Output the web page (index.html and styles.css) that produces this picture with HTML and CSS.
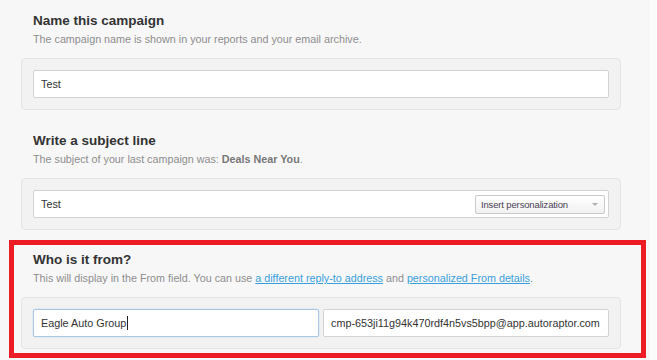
FILE: index.html
```html
<!DOCTYPE html>
<html>
<head>
<meta charset="utf-8">
<link rel="stylesheet" href="styles.css">
</head>
<body>
<div class="page">
  <section class="field">
    <h2 class="title">Name this campaign</h2>
    <p class="hint">The campaign name is shown in your reports and your email archive.</p>
    <div class="well">
      <div class="input">Test</div>
    </div>
  </section>

  <section class="field">
    <h2 class="title">Write a subject line</h2>
    <p class="hint">The subject of your last campaign was: <strong>Deals Near You</strong>.</p>
    <div class="well">
      <div class="input input-split">
        <span>Test</span>
        <div class="select"><span>Insert personalization</span><span class="arrow"></span></div>
      </div>
    </div>
  </section>

  <div class="highlight">
    <section class="field field-inner">
      <h2 class="title">Who is it from?</h2>
      <p class="hint">This will display in the From field. You can use <a href="#">a different reply-to address</a> and <a href="#">personalized From details</a>.</p>
      <div class="well">
        <div class="row">
          <div class="input input-name input-focus">Eagle Auto Group<span class="caret"></span></div>
          <div class="input input-email">cmp-653ji11g94k470rdf4n5vs5bpp@app.autoraptor.com</div>
        </div>
      </div>
    </section>
  </div>
</div>
</body>
</html>
```
FILE: styles.css
```css
html, body {
  margin: 0;
  padding: 0;
}
body {
  background: #fbfbfb;
  font-family: "Liberation Sans", Arial, sans-serif;
  color: #333;
}
.page {
  width: 650px;
  height: 360px;
  box-sizing: border-box;
  padding-top: 12px;
  background: #f7f7f7;
  overflow: hidden;
}
.field {
  margin-left: 21px;
  width: 600px;
}
.field + .field {
  margin-top: 22px;
}
.title {
  margin: 0;
  padding-left: 12px;
  font-size: 13.5px;
  line-height: 17px;
  font-weight: bold;
  color: #333;
}
.hint {
  margin: 3px 0 12px;
  padding-left: 12px;
  font-size: 10.75px;
  line-height: 14px;
  color: #8e8e8e;
}
.hint strong {
  color: #777;
}
.hint a {
  color: #3a9fdc;
  text-decoration: underline;
}
.well {
  background: #f2f2f2;
  border: 1px solid #e4e4e4;
  border-radius: 4px;
  padding: 11px;
}
.input {
  box-sizing: border-box;
  height: 28px;
  background: #fff;
  border: 1px solid #d2d2d2;
  border-radius: 2px;
  padding: 0 7px;
  font-size: 10.8px;
  color: #333;
  display: flex;
  align-items: center;
  white-space: nowrap;
}
.input-split {
  justify-content: space-between;
  padding-right: 3px;
}
.select {
  box-sizing: border-box;
  width: 130px;
  height: 19px;
  border: 1px solid #c9c9c9;
  border-radius: 2px;
  background: linear-gradient(#ffffff, #f1f1f1);
  padding: 0 6px 0 5px;
  font-size: 9.5px;
  letter-spacing: -0.15px;
  color: #4a3f55;
  display: flex;
  align-items: center;
  justify-content: space-between;
}
.arrow {
  width: 0;
  height: 0;
  border-left: 3px solid transparent;
  border-right: 3px solid transparent;
  border-top: 3px solid #b0b0b0;
  margin-top: 1px;
}
.highlight {
  margin-top: 10px;
  margin-left: 9px;
  width: 637px;
  box-sizing: border-box;
  border: 5px solid #ed1c24;
  padding: 6px 0 4px 0;
}
.field-inner {
  margin-left: 7px;
}
.row {
  display: flex;
  gap: 4px;
}
.input-name {
  flex: 0 0 286px;
}
.input-email {
  flex: 1 1 0;
  min-width: 0;
  overflow: hidden;
}
.input-focus {
  border-color: #a9c9e4;
  box-shadow: 0 0 2px rgba(82, 168, 236, 0.35);
}
.caret {
  display: inline-block;
  width: 1px;
  height: 14px;
  background: #222;
  margin-left: 1px;
}
```
